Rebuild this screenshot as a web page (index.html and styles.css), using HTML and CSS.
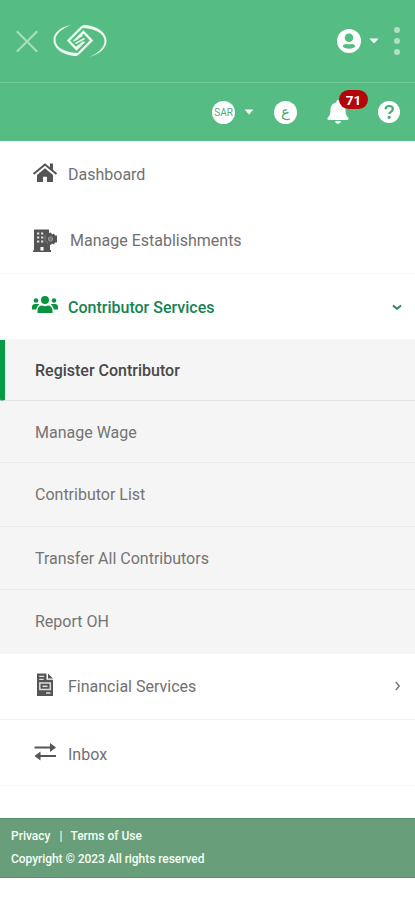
FILE: index.html
```html
<!DOCTYPE html>
<html lang="en">
<head>
<meta charset="utf-8">
<title>Contributor Services</title>
<link rel="stylesheet" href="styles.css">
</head>
<body>
<header>
  <div class="bar brand-bar">
    <svg class="close" width="22" height="23" viewBox="0 0 22 23"><path d="M.8 1.2 21.2 21.8M21.2 1.2.8 21.8"/></svg>
    <svg class="logo" width="54" height="34" viewBox="0 0 54 34">
      <path class="solid" d="M18 1C7 3 .5 9 .5 16 .5 25 11 32 24 32l2-3C12 29 2.500 23.500 2.500 16 2.500 10 8 5 18 1Z"/>
      <path class="solid" d="M36 33C47 30 53.500 24 53.500 17 53.500 8 43 1 30 1l-2 3c14 0 23.500 5.500 23.500 13 0 6-5.500 12-15.500 16Z"/>
      <path class="arc" d="M29.500 2.500 15.500 16.500 23.500 25l7-7M24.500 30.500 38.500 16.500 30.500 8l-7.500 7.500"/>
      <path class="inner" d="m20.500 17 9-6M22.500 19.500l9-5M23.500 23l8-5"/>
    </svg>
    <svg class="user" width="24" height="24" viewBox="0 0 24 24"><circle cx="12" cy="12" r="12" fill="#fff"/><circle cx="12" cy="8.800" r="4.300" fill="#55bd84"/><path d="M5.800 17.800c0-2 1.500-2.900 3.200-2.900 1.300.6 4.700.6 6 0 1.700 0 3.200.9 3.200 2.900-2.500 2.600-9.900 2.600-12.400 0Z" fill="#55bd84"/></svg>
    <svg class="user-caret" width="10" height="6" viewBox="0 0 10 6"><path d="M.4.5h9.200L5 5.500Z" fill="#fff"/></svg>
    <svg class="dots" width="6" height="28" viewBox="0 0 6 28"><circle cx="3" cy="3" r="3"/><circle cx="3" cy="14" r="3"/><circle cx="3" cy="25" r="3"/></svg>
  </div>
  <div class="bar tool-bar">
    <span class="disc sar">SAR</span>
    <svg class="sar-caret" width="10" height="6" viewBox="0 0 10 6"><path d="M.7.5h8.600L5 5.500Z" fill="#fff"/></svg>
    <span class="disc lang">ع</span>
    <span class="bell">
      <svg width="22" height="24" viewBox="0 0 22 24"><path d="M11 0a1.600 1.600 0 0 0-1.600 1.600v.9C5.600 3.200 3.500 6 3.500 9.500c0 5-1.300 6.800-2.800 8.300C0 18.700.5 20 1.700 20h18.600c1.200 0 1.700-1.300 1-2.200-1.500-1.500-2.800-3.300-2.800-8.300 0-3.500-2.100-6.300-5.900-7v-.9A1.600 1.600 0 0 0 11 0ZM8.300 21a2.700 2.700 0 0 0 5.400 0Z" fill="#fff"/></svg>
      <b class="badge">71</b>
    </span>
    <svg class="help" width="22" height="22" viewBox="0 0 22 22"><circle cx="11" cy="11" r="11" fill="#fff"/><path d="M7.400 8.300C7.800 6.200 9.100 5 11.100 5c2.200 0 3.700 1.300 3.700 3.100 0 2.700-3.500 2.700-3.500 5" fill="none" stroke="#43ae76" stroke-width="2.200"/><circle cx="11.200" cy="16.300" r="1.600" fill="#43ae76"/></svg>
  </div>
</header>
<nav>
  <a class="item dashboard">
    <svg width="26" height="22" viewBox="0 0 26 22"><path d="M13 6.300 5 13v7h6v-5.200h4V20h6v-7Z"/><path d="m1.500 12 11.500-9.500L24.500 12" fill="none" stroke="currentColor" stroke-width="2"/><path d="M18 1.500h3v7L18 6Z"/></svg>
    <span>Dashboard</span>
  </a>
  <a class="item manage">
    <svg width="26" height="24" viewBox="0 0 26 24"><path d="M2 .5h15V4l2-.5 1 2 2-1 1 2h2v7h-2l-1 2-2-1-1 1.500-1-.5v5.500h1V23H1v-1.500h1Z"/><path d="M5 4.500h2.300M9 4.500h2.300M5 8.500h2.300M9 8.500h2.300M5 12.500h2.300M9 12.500h2.300" stroke="#ddd" stroke-width="2"/><path d="M8.500 21.500v-3.500h3v3.500Z" fill="#fff"/><circle cx="18.500" cy="10" r="2.200" fill="#777" stroke="#999"/><path d="M14 5.500c-2 3-1 7 2 9" fill="none" stroke="#888"/></svg>
    <span>Manage Establishments</span>
  </a>
  <a class="item services">
    <svg width="26" height="20" viewBox="0 0 26 20"><circle cx="13" cy="5" r="4"/><circle cx="4" cy="5.500" r="2.300"/><circle cx="22" cy="5.500" r="2.300"/><path d="M5.500 18v-2.500c0-3 2-5 4.500-5 2 1 4 1 6 0 2.500 0 4.500 2 4.500 5V18ZM0 14.500V12c0-2 1.200-3 3-3h3c.5 0 1 .2 1.400.5C5.500 10.800 4.500 12.500 4.300 14.500ZM26 14.500V12c0-2-1.200-3-3-3h-3c-.5 0-1 .2-1.400.5 1.900 1.300 2.900 3 3.100 5Z"/></svg>
    <span>Contributor Services</span>
    <svg class="chevron" width="10" height="7" viewBox="0 0 10 7"><path d="m1 1.500 4 3.300 4-3.300"/></svg>
  </a>
  <div class="sub">
    <a class="active"><span>Register Contributor</span></a>
    <a><span>Manage Wage</span></a>
    <a><span>Contributor List</span></a>
    <a><span>Transfer All Contributors</span></a>
    <a><span>Report OH</span></a>
  </div>
  <a class="item financial">
    <svg width="26" height="24" viewBox="0 0 26 24"><path d="M5 .5h9.500v6.200H21V23H5ZM16 .5l5 5h-5Z"/><path d="M7.200 3.300h5M7.200 6.300h4.500M14 20h4.500" stroke="#ddd" stroke-width="1.300"/><rect x="7.800" y="10" width="10.500" height="6.500" fill="none" stroke="#ddd" stroke-width="1.500"/><path d="M10.500 13.300h5" stroke="#ddd" stroke-width="1.500"/></svg>
    <span>Financial Services</span>
    <svg class="chevron" width="7" height="10" viewBox="0 0 7 10"><path d="m1.800 1 3.400 4-3.400 4"/></svg>
  </a>
  <a class="item inbox">
    <svg width="26" height="20" viewBox="0 0 26 20"><path d="M2.500 5.500h17M6.500 14h17.500" fill="none" stroke="currentColor" stroke-width="2"/><path d="m18 1 6 4.500-6 4.500ZM8.500 9.500l-6 4.500 6 4.500Z"/></svg>
    <span>Inbox</span>
  </a>
</nav>
<footer>
  <div class="links"><span>Privacy</span><i>|</i><span>Terms of Use</span></div>
  <div class="copy">Copyright © 2023 All rights reserved</div>
</footer>
</body>
</html>
```
FILE: styles.css
```css
* { box-sizing: border-box; }
body { margin: 0; background: #fff; color: #666; font: 16px Roboto, "Liberation Sans", sans-serif; }
svg { display: block; flex: none; overflow: visible; }
header { height: 141px; background: #55bd84; }
.bar { display: flex; align-items: center; }
.brand-bar { height: 83px; padding-left: 16px; border-bottom: 1px solid #71c999; }
.close { fill: none; stroke: #a9dfc0; stroke-width: 2; }
.logo { margin-left: 15px; }
.arc { fill: none; stroke: #f0fbf1; stroke-width: 2.4; }
.inner { fill: none; stroke: #e4f6e9; stroke-width: 1.6; }
.solid { fill: #eefaf0; }
.user { margin-left: 230px; }
.user-caret { margin-left: 8px; }
.dots { margin-left: 15px; fill: #b1dfc4; }
.tool-bar { height: 58px; padding-left: 212px; }
.disc { display: flex; align-items: center; justify-content: center; width: 23px; height: 23px; border-radius: 50%; background: #fff; color: #55a97c; flex: none; }
.sar { font-size: 10px; }
.sar-caret { margin-left: 9px; }
.lang { margin-left: 20px; font: 15px/15px "DejaVu Sans", sans-serif; }
.bell { position: relative; margin-left: 30px; }
.badge { position: absolute; left: 12px; top: -10px; width: 29px; height: 19px; border-radius: 10px; background: #b40509; color: #fff; font-size: 13.5px; line-height: 20px; text-align: center; }
.help { margin: -1px 0 0 29px; }
.item { display: flex; align-items: center; height: 66.5px; padding: 2px 13px 0 32px; border-bottom: 1px solid #f8f8f8; color: #555; }
.item svg { fill: currentColor; margin-top: -4px; }
.item span { margin-left: 10px; color: #707070; white-space: nowrap; }
.dashboard { border-color: transparent; }
.item.manage { padding-top: 1px; }
.manage svg { margin-top: 0; }
.manage span { margin-left: 12px; }
.item.services { height: 66px; color: #07943c; }
.services svg { margin-top: -5px; }
.services span { color: #168252; font-weight: 500; }
.item .chevron { margin: -1px 0 0 auto; fill: none; stroke: #278564; stroke-width: 2; }
.financial .chevron { stroke: #777; stroke-width: 1.5; margin-right: 1px; }
.sub { background: #f5f5f5; height: 314px; display: grid; grid-template-rows: 61px 62px 64px 63px 64px; }
.sub a { display: flex; align-items: center; padding-left: 35px; border-bottom: 1px solid #e9e9e9; color: #747474; }
.sub a:nth-child(2) { padding-top: 1px; }
.sub a:last-child { border-bottom: 0; padding-bottom: 2px; }
.sub .active { border-left: 5px solid #079b45; border-radius: 0 0 0 2px; padding-left: 30px; color: #484848; font-weight: 500; border-bottom-color: #e2e2e2; }
.item.financial, .item.inbox { height: 66px; }
.item.financial { border-color: #f3f3f3; padding-top: 0; }
.item.inbox { padding-top: 3px; }
footer { margin-top: 32px; height: 60px; padding: 6px 11px; background: #689e79; border-top: 1px solid #559367; border-bottom: 1px solid #559367; color: #f5fff5; font-size: 12px; line-height: 23px; font-weight: 500; white-space: nowrap; }
.links { display: flex; }
.links i { margin: 0 8px 0 9px; font-style: normal; }
.copy { letter-spacing: -.05px; }
```
